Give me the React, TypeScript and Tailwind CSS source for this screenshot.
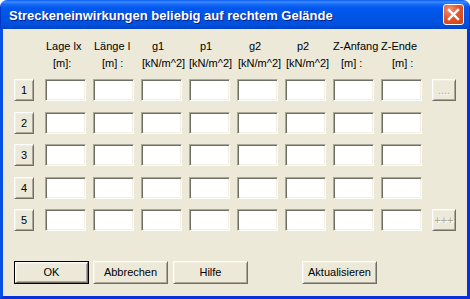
import React from "react";

const sunken =
  "border border-t-[#ACA899] border-l-[#ACA899] border-b-white border-r-white shadow-[inset_1px_1px_#716F64,inset_-1px_-1px_#F1EFE2] bg-white";
const raised =
  "border border-t-white border-l-white border-b-[#716F64] border-r-[#716F64] shadow-[inset_1px_1px_#F1EFE2,inset_-1px_-1px_#ACA899] bg-[#ECE9D8]";

const headers: [string, number, string, number][] = [
  ["Lage lx", 1, "[m]:", 8],
  ["Länge l", 1, "[m] :", 9],
  ["g1", 11, "[kN/m^2]", 1],
  ["p1", 11, "[kN/m^2]", 0],
  ["g2", 12, "[kN/m^2]", 1],
  ["p2", 12, "[kN/m^2]", 1],
  ["Z-Anfang", 0, "[m] :", 8],
  ["Z-Ende", 0, "[m] :", 11],
];

const rowTops = [9, 11, 10, 11, 10];

function Row({ n, extra }: { n: number; extra?: string }) {
  return (
    <div className="flex items-center h-[22px]" style={{ marginTop: rowTops[n - 1] }}>
      <div className={`${raised} w-[20px] h-[22px] flex items-center justify-center text-[11px] leading-none text-black`}>
        {n}
      </div>
      <div className="ml-[11px] grid grid-cols-[repeat(8,41px)] gap-x-[7px]">
        {Array.from({ length: 8 }).map((_, i) => (
          <div key={i} className={`${sunken} h-[22px]`} />
        ))}
      </div>
      {extra && (
        <div
          className={`${raised} ml-[10px] w-[24px] h-[22px] flex items-center justify-center text-[11px] leading-none text-[#ACA899] [text-shadow:1px_1px_#ffffff]`}
        >
          {extra}
        </div>
      )}
    </div>
  );
}

function Btn({ label, def, className = "" }: { label: string; def?: boolean; className?: string }) {
  if (def) {
    return (
      <div className={`border border-black w-[75px] h-[23px] ${className}`}>
        <div className={`${raised} w-full h-full flex items-center justify-center text-[11px] text-black`}>{label}</div>
      </div>
    );
  }
  return (
    <div className={`${raised} w-[75px] h-[23px] flex items-center justify-center text-[11px] text-black ${className}`}>
      {label}
    </div>
  );
}

export default function App() {
  return (
    <div
      className="w-[470px] h-[299px] bg-white overflow-hidden"
      style={{ fontFamily: '"Liberation Sans", Arial, sans-serif' }}
    >
      <div className="w-full h-full flex flex-col rounded-t-[7px] overflow-hidden">
        <div className="h-[29px] flex items-center pl-[8px] pr-[5px] bg-[linear-gradient(to_bottom,#0A5BEF_0px,#3C8DFF_2px,#1B6CF8_4px,#0058EE_8px,#0054E3_18px,#0050DB_25px,#0043C8_29px)] border-l border-r border-[#0037C9]">
          <div className="flex-1 text-white font-bold text-[13px] leading-none [text-shadow:1px_1px_#0A1E8C] pt-[1px]">
            Streckeneinwirkungen beliebig auf rechtem Gelände
          </div>
          <div className="w-[21px] h-[21px] rounded-[3px] border border-white bg-[radial-gradient(circle_at_30%_25%,#F39275_0%,#E4572D_45%,#C9400F_100%)] flex items-center justify-center">
            <svg width="13" height="13" viewBox="0 0 13 13">
              <path d="M2 2 L11 11 M11 2 L2 11" stroke="white" strokeWidth="2.4" strokeLinecap="square" />
            </svg>
          </div>
        </div>
        <div className="flex-1 flex border-l-[3px] border-r-[3px] border-b-[3px] border-l-[#0650E6] border-r-[#0831D9] border-b-[#0831D9]">
          <div className="flex-1 bg-[#ECE9D8] pl-[11px] pt-[11px] flex flex-col text-black">
            <div className="ml-[31px] grid grid-cols-[repeat(8,41px)] gap-x-[7px] text-[11px] leading-[13px]">
              {headers.map(([a, ao], i) => (
                <div key={i} className="whitespace-nowrap" style={{ paddingLeft: ao }}>
                  {a}
                </div>
              ))}
            </div>
            <div className="ml-[31px] mt-[4px] grid grid-cols-[repeat(8,41px)] gap-x-[7px] text-[11px] leading-[13px]">
              {headers.map(([, , b, bo], i) => (
                <div key={i} className="whitespace-nowrap" style={{ paddingLeft: bo }}>
                  {b}
                </div>
              ))}
            </div>
            <Row n={1} extra="...." />
            <Row n={2} />
            <Row n={3} />
            <Row n={4} />
            <Row n={5} extra="+++" />
            <div className="flex mt-[30px]">
              <Btn label="OK" def />
              <Btn label="Abbrechen" className="ml-[4px]" />
              <Btn label="Hilfe" className="ml-[5px]" />
              <Btn label="Aktualisieren" className="ml-[54px]" />
            </div>
          </div>
        </div>
      </div>
    </div>
  );
}
